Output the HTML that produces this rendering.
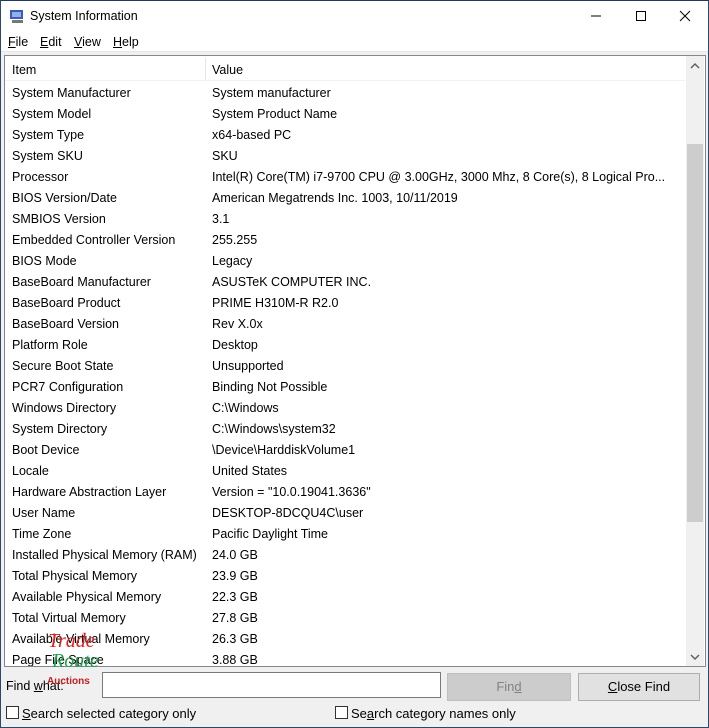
<!DOCTYPE html>
<html><head><style>
*{margin:0;padding:0;box-sizing:border-box}
body{width:709px;height:728px;background:#f0f0f0;font-family:"Liberation Sans",sans-serif;font-size:12.5px;color:#000;position:relative;overflow:hidden}
.frame{position:absolute;left:0;top:0;width:709px;height:728px;border:1px solid #2b4a6b;border-top-color:#1f3a5a}
.title{position:absolute;left:1px;top:1px;width:707px;height:30px;background:#fff}
.title span{position:absolute;left:29px;top:8px;font-size:12.5px}
.menu{position:absolute;left:1px;top:31px;width:707px;height:21px;background:#fff;border-bottom:1px solid #e6e6e6}
.menu span{position:absolute;top:4px}
.list{position:absolute;left:4px;top:55px;width:702px;height:612px;background:#fff;border:1px solid #828790;overflow:hidden}
.row{position:absolute;left:7px;height:21px;white-space:nowrap}
.v{position:absolute;left:207px;white-space:nowrap}
.sb{position:absolute;left:681px;top:0;width:18px;height:610px;background:#f0f0f0}
.thumb{position:absolute;left:1px;top:88px;width:16px;height:378px;background:#cdcdcd}
.btn{position:absolute;top:673px;height:28px;border:1px solid #adadad;background:#e1e1e1;text-align:center;line-height:26px;font-size:13px}
.cb{position:absolute;top:706px;width:13px;height:13px;border:1px solid #333;background:#fff}
u{text-decoration:underline}
</style></head><body>
<div class="title">
<svg style="position:absolute;left:8px;top:7px" width="16" height="16"><rect x="1" y="2" width="13" height="9" fill="#3a5bb8"/><rect x="3" y="4" width="9" height="5" fill="#8fb0e8"/><rect x="3" y="12" width="11" height="3" fill="#777"/></svg>
<span>System Information</span>
<svg style="position:absolute;left:586px;top:8px" width="110" height="14"><line x1="4" y1="7" x2="14" y2="7" stroke="#000"/><rect x="49.5" y="2.5" width="9" height="9" fill="none" stroke="#000"/><path d="M93 2 L103 12 M103 2 L93 12" stroke="#000"/></svg>
</div>
<div class="menu"><span style="left:7px"><u>F</u>ile</span><span style="left:39px"><u>E</u>dit</span><span style="left:73px"><u>V</u>iew</span><span style="left:112px"><u>H</u>elp</span></div>
<div class="list">
<div style="position:absolute;left:0;top:0;width:680px;height:25px;border-bottom:1px solid #f2f2f2"></div>
<div style="position:absolute;left:200px;top:2px;width:1px;height:22px;background:#e5e5e5"></div>
<div class="row" style="top:7px">Item<span class="v" style="left:200px">Value</span></div>
<div id="rows"></div>
<div class="sb"><svg style="position:absolute;left:4px;top:6px" width="10" height="8"><path d="M1 6 L5 2 L9 6" stroke="#606060" stroke-width="1.5" fill="none"/></svg><div class="thumb"></div><svg style="position:absolute;left:4px;top:597px" width="10" height="8"><path d="M1 2 L5 6 L9 2" stroke="#606060" stroke-width="1.5" fill="none"/></svg></div>
</div>
<div style="position:absolute;left:6px;top:679px">Find <u>w</u>hat:</div>
<div style="position:absolute;left:102px;top:672px;width:339px;height:26px;background:#fff;border:1px solid #7a7a7a"></div>
<div class="btn" style="left:447px;width:124px;color:#838383;background:#cccccc;border-color:#bfbfbf">Fin<u>d</u></div>
<div class="btn" style="left:578px;width:122px"><u>C</u>lose Find</div>
<div class="cb" style="left:6px"></div><div style="position:absolute;left:22px;top:706px;font-size:13px"><u>S</u>earch selected category only</div>
<div class="cb" style="left:335px"></div><div style="position:absolute;left:351px;top:706px;font-size:13px">Se<u>a</u>rch category names only</div>
<div style="position:absolute;left:48px;top:630px;font-family:'Liberation Serif',serif;font-style:italic;font-size:20px;color:#e02020">Trade</div>
<div style="position:absolute;left:52px;top:650px;font-family:'Liberation Serif',serif;font-style:italic;font-size:20px;color:#20a050">Route</div>
<div style="position:absolute;left:47px;top:676px;font-size:10px;font-weight:bold;color:#c02020">Auctions</div>
<div class="frame"></div>
<script>
var d=[["System Manufacturer","System manufacturer"],["System Model","System Product Name"],["System Type","x64-based PC"],["System SKU","SKU"],["Processor","Intel(R) Core(TM) i7-9700 CPU @ 3.00GHz, 3000 Mhz, 8 Core(s), 8 Logical Pro..."],["BIOS Version/Date","American Megatrends Inc. 1003, 10/11/2019"],["SMBIOS Version","3.1"],["Embedded Controller Version","255.255"],["BIOS Mode","Legacy"],["BaseBoard Manufacturer","ASUSTeK COMPUTER INC."],["BaseBoard Product","PRIME H310M-R R2.0"],["BaseBoard Version","Rev X.0x"],["Platform Role","Desktop"],["Secure Boot State","Unsupported"],["PCR7 Configuration","Binding Not Possible"],["Windows Directory","C:\\Windows"],["System Directory","C:\\Windows\\system32"],["Boot Device","\\Device\\HarddiskVolume1"],["Locale","United States"],["Hardware Abstraction Layer","Version = \"10.0.19041.3636\""],["User Name","DESKTOP-8DCQU4C\\user"],["Time Zone","Pacific Daylight Time"],["Installed Physical Memory (RAM)","24.0 GB"],["Total Physical Memory","23.9 GB"],["Available Physical Memory","22.3 GB"],["Total Virtual Memory","27.8 GB"],["Available Virtual Memory","26.3 GB"],["Page File Space","3.88 GB"]];
var h="";d.forEach(function(r,i){h+='<div class="row" style="top:'+(30+i*21)+'px">'+r[0].replace(/</g,"&lt;")+'<span class="v" style="left:200px">'+r[1]+'</span></div>';});
document.getElementById("rows").innerHTML=h;
</script>
</body></html>
